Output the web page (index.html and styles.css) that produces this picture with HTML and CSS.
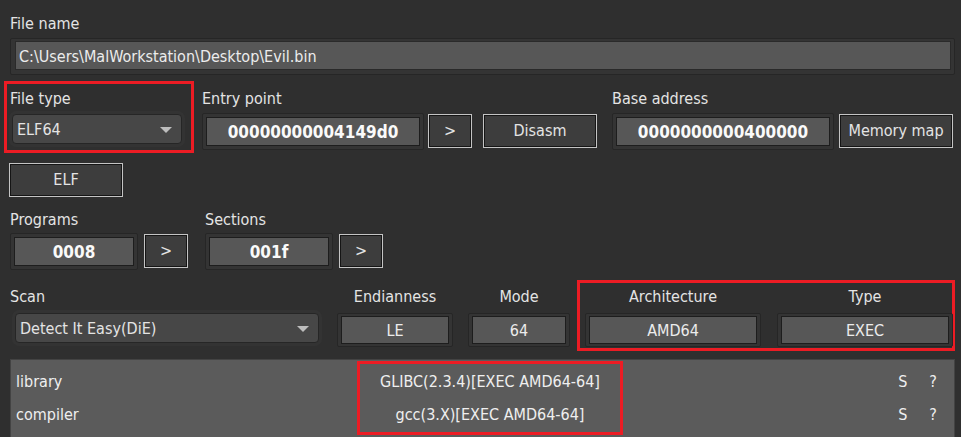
FILE: index.html
```html
<!DOCTYPE html>
<html lang="en">
<head>
  <meta charset="UTF-8">
  <title>Detect It Easy</title>
  <link rel="stylesheet" href="styles.css">
</head>
<body>
  <div class="window">

    <!-- File name -->
    <div class="label">File name</div>
    <div class="frame path-frame">
      <div class="value path">C:\Users\MalWorkstation\Desktop\Evil.bin</div>
    </div>

    <!-- File type / entry point / base address -->
    <div class="row info-row">
      <div class="group mark filetype">
        <div class="label">File type</div>
        <div class="combo filetype-combo"><span>ELF64</span><i class="arrow"></i></div>
      </div>
      <div class="group entry">
        <div class="label">Entry point</div>
        <div class="row">
          <div class="frame w-addr"><div class="value bold">00000000004149d0</div></div>
          <div class="btn small">&gt;</div>
          <div class="btn wide disasm">Disasm</div>
        </div>
      </div>
      <div class="group base">
        <div class="label">Base address</div>
        <div class="row">
          <div class="frame w-addr"><div class="value bold">0000000000400000</div></div>
          <div class="btn wide">Memory map</div>
        </div>
      </div>
    </div>

    <div class="btn wide elf">ELF</div>

    <!-- Programs / sections -->
    <div class="row counts">
      <div class="group">
        <div class="label">Programs</div>
        <div class="row">
          <div class="frame w-count"><div class="value bold">0008</div></div>
          <div class="btn small">&gt;</div>
        </div>
      </div>
      <div class="group sections">
        <div class="label">Sections</div>
        <div class="row">
          <div class="frame w-count"><div class="value bold">001f</div></div>
          <div class="btn small">&gt;</div>
        </div>
      </div>
    </div>

    <!-- Scan options -->
    <div class="row scan-row">
      <div class="group">
        <div class="label">Scan</div>
        <div class="combo scan-combo"><span>Detect It Easy(DiE)</span><i class="arrow"></i></div>
      </div>
      <div class="group centered endian">
        <div class="label">Endianness</div>
        <div class="frame w-endian"><div class="value">LE</div></div>
      </div>
      <div class="group centered mode">
        <div class="label">Mode</div>
        <div class="frame w-mode"><div class="value">64</div></div>
      </div>
      <div class="mark arch-box">
        <div class="group centered">
          <div class="label">Architecture</div>
          <div class="frame w-arch"><div class="value">AMD64</div></div>
        </div>
        <div class="group centered">
          <div class="label">Type</div>
          <div class="frame w-arch"><div class="value">EXEC</div></div>
        </div>
      </div>
    </div>

    <!-- Results -->
    <div class="results">
      <div class="res-col names">
        <div class="res-line">library</div>
        <div class="res-line">compiler</div>
      </div>
      <div class="res-col mark found">
        <div class="res-line">GLIBC(2.3.4)[EXEC AMD64-64]</div>
        <div class="res-line">gcc(3.X)[EXEC AMD64-64]</div>
      </div>
      <div class="res-col flags">
        <div class="res-line"><span>S</span><span>?</span></div>
        <div class="res-line"><span>S</span><span>?</span></div>
      </div>
    </div>

  </div>
</body>
</html>
```

FILE: styles.css
```css
body {
  margin: 0;
  background: #2f2f2f;
  color: #e4e4e4;
  font-family: "DejaVu Sans Condensed", "DejaVu Sans", sans-serif;
  font-size: 16px;
}
.window {
  width: 961px;
  height: 437px;
  overflow: hidden;
  padding: 14px 6px 0 10px;
  box-sizing: border-box;
}
.row {
  display: flex;
  align-items: flex-start;
}
.label {
  height: 20px;
  line-height: 20px;
  white-space: nowrap;
}
.mark {
  border: 3px solid #ec1c24;
}

/* boxes */
.frame {
  background: #343434;
  border: 1px solid #262626;
  padding: 3px;
  border-radius: 2px;
  box-sizing: border-box;
}
.value {
  background: #575757;
  border: 1px solid #1d1d1d;
  height: 29px;
  line-height: 29px;
  text-align: center;
  color: #ececec;
  box-sizing: border-box;
  white-space: nowrap;
}
.bold {
  font-weight: bold;
  font-size: 17px;
  color: #fafafa;
}
.path-frame {
  margin-top: 4px;
  width: 945px;
  padding: 2px 3px 4px 4px;
}
.path {
  text-align: left;
  padding-left: 3px;
  height: 29px;
  border-color: #2a2a2a;
}

.btn {
  height: 34px;
  line-height: 32px;
  border: 1px solid #c4c4c4;
  box-shadow: inset 0 0 0 1px #151515;
  background: #3d3d3d;
  text-align: center;
  box-sizing: border-box;
  color: #e4e4e4;
}
.btn.small { width: 44px; margin-left: 4px; font-size: 16px; }
.btn.wide { width: 114px; }

.combo {
  background: #474747;
  border: 1px solid #262626;
  border-radius: 4px;
  height: 30px;
  line-height: 29px;
  box-sizing: border-box;
  padding-left: 4px;
  position: relative;
  box-shadow: 0 0 0 3px #333;
}
.arrow {
  position: absolute;
  right: 9px;
  top: 12px;
  border-left: 6px solid transparent;
  border-right: 6px solid transparent;
  border-top: 6px solid #bdbdbd;
}

/* row 2 */
.info-row { margin-top: 6px; height: 72px; }
.filetype {
  margin-left: -6px;
  width: 190px;
  height: 72px;
  box-sizing: border-box;
  padding: 5px 0 0 3px;
}
.filetype-combo {
  margin: 5px 0 0 2px;
  width: 170px;
}
.entry { margin-left: 8px; padding-top: 8px; }
.entry .row, .base .row { margin-top: 4px; }
.w-addr { width: 222px; height: 37px; }
.disasm { margin-left: 11px; }
.base { margin-left: 15px; padding-top: 8px; }
.base .btn.wide { margin-left: 5px; width: 114px; }
.entry .btn, .base .btn { margin-top: 1px; }

.elf { margin-top: 10px; margin-left: -1px; height: 34px; }

/* row 4 */
.counts { margin-top: 13px; }
.w-count { width: 128px; height: 37px; margin-top: 3px; }
.w-count + .btn { margin-left: 6px; margin-top: 4px; }
.sections { margin-left: 17px; }

/* row 5 */
.scan-row { margin-top: 10px; height: 71px; }
.scan-row > .group { padding-top: 7px; }
.scan-combo { margin: 6px 0 0 5px; width: 304px; }
.centered { display: flex; flex-direction: column; align-items: center; }
.endian { margin-left: 18px; }
.mode { margin-left: 15px; }
.w-endian { width: 116px; height: 34px; margin-top: 6px; padding: 2px 3px; }
.w-mode { width: 102px; height: 34px; margin-top: 6px; padding: 2px 3px; }
.w-endian .value, .w-mode .value, .w-arch .value { height: 28px; line-height: 27px; }
.arch-box {
  margin-left: 7px;
  width: 378px;
  height: 71px;
  box-sizing: border-box;
  display: flex;
  gap: 16px;
  padding: 4px 0 0 5px;
}
.w-arch { width: 176px; height: 34px; margin-top: 6px; padding: 2px 3px; }

/* results */
.results {
  margin-top: 8px;
  background: #5b5b5b;
  border: 1px solid #434343;
  width: 945px;
  height: 90px;
  box-sizing: border-box;
  display: flex;
  align-items: flex-start;
  color: #efefef;
}
.res-col { display: flex; flex-direction: column; }
.res-line { height: 33px; line-height: 33px; white-space: nowrap; }
.names { width: 346px; padding: 5px 0 0 5px; box-sizing: border-box; }
.found {
  width: 266px;
  height: 74px;
  box-sizing: border-box;
  margin-top: 1px;
  align-items: center;
  padding-top: 1px;
}
.flags { margin-left: auto; padding: 5px 17px 0 0; }
.flags .res-line { display: flex; gap: 22px; }
```
